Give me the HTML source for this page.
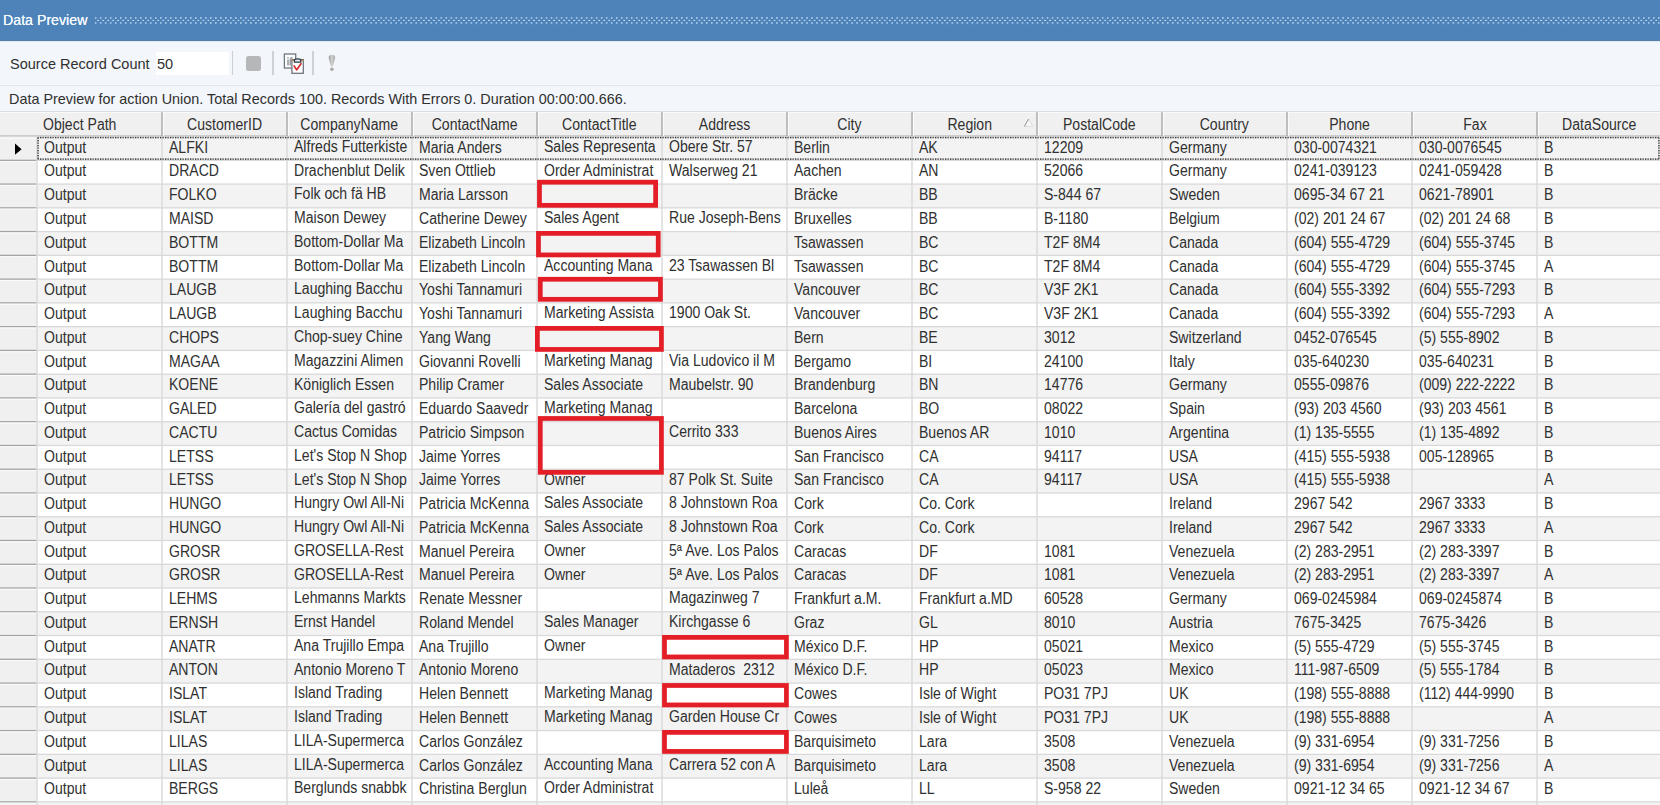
<!DOCTYPE html><html><head><meta charset="utf-8"><style>
html,body{margin:0;padding:0;}
body{width:1660px;height:805px;overflow:hidden;position:relative;background:#f3f6fa;font-family:"Liberation Sans",sans-serif;color:#303030;}
.a{position:absolute;}
.t{position:absolute;white-space:nowrap;line-height:1;transform-origin:0 0;}
.g{font-size:15.6px;transform:scaleX(0.901);}

</style></head><body>
<div class="a" style="left:0;top:0;width:1660px;height:40px;background:#4d83b9;"></div>
<div class="a" style="left:0;top:40px;width:1660px;height:1px;background:#5a7fa6;"></div>
<div class="a" style="left:0;top:41px;width:1660px;height:1px;background:#dce9f8;"></div>
<div class="t" style="left:2.7px;top:12.0px;font-size:15.4px;color:#f4f9ff;transform:scaleX(0.922);text-shadow:0 0 0.4px #fff;">Data Preview</div>
<svg class="a" style="left:94px;top:16px;" width="1566" height="8.5"><defs><pattern id="dp" x="0" y="0" width="5.01" height="5" patternUnits="userSpaceOnUse"><rect x="1" y="1.2" width="1.2" height="1.5" fill="#dcedfe"/><rect x="1" y="6.2" width="1.2" height="1.5" fill="#dcedfe"/><rect x="3.5" y="3.9" width="1.4" height="1.1" fill="#dcedfe"/></pattern></defs><rect x="0" y="0" width="1566" height="8.5" fill="url(#dp)"/></svg>
<div class="t" style="left:9.8px;top:55.6px;font-size:15px;transform:scaleX(0.968);">Source Record Count</div>
<div class="a" style="left:156px;top:52px;width:73px;height:23px;background:#fff;"></div>
<div class="t" style="left:156.8px;top:55.6px;font-size:15px;transform:scaleX(0.968);">50</div>
<div class="a" style="left:232.3px;top:51px;width:1.2px;height:24px;background:#cdd0d5;"></div>
<div class="a" style="left:272.4px;top:51px;width:1.2px;height:24px;background:#cdd0d5;"></div>
<div class="a" style="left:312.4px;top:51px;width:1.2px;height:24px;background:#cdd0d5;"></div>
<div class="a" style="left:246px;top:56px;width:15px;height:15px;background:#b6b7b9;border-radius:2.5px;"></div>
<svg class="a" style="left:280px;top:50px;" width="30" height="28">
<rect x="4.4" y="4" width="11.3" height="14" fill="#fff" stroke="#6e7780" stroke-width="1.3"/>
<rect x="7.3" y="9.5" width="1.4" height="6" fill="#8a8f95"/><rect x="7.3" y="7" width="1.4" height="1.4" fill="#8a8f95"/>
<path d="M10.2 15.5 L10.2 9.5 Q10.5 7.5 12.5 7.5" stroke="#8a8f95" stroke-width="1.3" fill="none"/>
<rect x="11.9" y="9.6" width="11.4" height="13.7" fill="#fff" stroke="#6e7780" stroke-width="1.3"/>
<path d="M11.5 10.5 L23.8 10.5" stroke="#b98a4a" stroke-width="1.2"/>
<path d="M14.4 12.2 L14.4 10.6 Q14.4 8.8 17.6 8.8 Q20.8 8.8 20.8 10.6 L20.8 12.2 Z" stroke="#2f3a44" stroke-width="1.2" fill="#e4ebf2"/>
<path d="M14.1 15.9 L16.6 19.9 L21.0 13.8" stroke="#d42a2e" stroke-width="1.7" fill="none" stroke-linecap="round" stroke-linejoin="round"/>
</svg>
<svg class="a" style="left:326px;top:53px;" width="12" height="20">
<defs><linearGradient id="eg" x1="0" x2="1" y1="0" y2="0"><stop offset="0" stop-color="#9c9c9c"/><stop offset="0.5" stop-color="#d2d2d2"/><stop offset="1" stop-color="#a8a8a8"/></linearGradient></defs>
<path d="M2.7 4.5 Q2.7 1.7 5.9 1.7 Q9.1 1.7 9.1 4.5 Q9.1 6 6.6 13.5 L5.2 13.5 Q2.7 6 2.7 4.5 Z" fill="url(#eg)"/>
<ellipse cx="5.9" cy="16.2" rx="1.8" ry="1.7" fill="#a9a9a9"/>
</svg>
<div class="a" style="left:0;top:85px;width:1660px;height:1px;background:#e2e6eb;"></div>
<div class="t" style="left:8.8px;top:91.6px;font-size:14.8px;transform:scaleX(0.972);">Data Preview for action Union. Total Records 100. Records With Errors 0. Duration 00:00:00.666.</div>
<svg class="a" style="left:0;top:0;" width="1660" height="805"><rect x="0" y="111" width="1660" height="1" fill="#d9dde2"/><rect x="0" y="112" width="1660" height="24.6" fill="#f0f0f0"/><rect x="0" y="112" width="1660" height="1" fill="#fafafa"/><rect x="0" y="135.5" width="1660" height="1.1" fill="#a9a9a9"/><rect x="161.3" y="112" width="1.4" height="24" fill="#a8a8a8"/><rect x="163.0" y="113" width="1" height="23" fill="#fbfbfb"/><rect x="286.3" y="112" width="1.4" height="24" fill="#a8a8a8"/><rect x="288.0" y="113" width="1" height="23" fill="#fbfbfb"/><rect x="411.3" y="112" width="1.4" height="24" fill="#a8a8a8"/><rect x="413.0" y="113" width="1" height="23" fill="#fbfbfb"/><rect x="536.3" y="112" width="1.4" height="24" fill="#a8a8a8"/><rect x="538.0" y="113" width="1" height="23" fill="#fbfbfb"/><rect x="661.3" y="112" width="1.4" height="24" fill="#a8a8a8"/><rect x="663.0" y="113" width="1" height="23" fill="#fbfbfb"/><rect x="786.3" y="112" width="1.4" height="24" fill="#a8a8a8"/><rect x="788.0" y="113" width="1" height="23" fill="#fbfbfb"/><rect x="911.3" y="112" width="1.4" height="24" fill="#a8a8a8"/><rect x="913.0" y="113" width="1" height="23" fill="#fbfbfb"/><rect x="1036.3" y="112" width="1.4" height="24" fill="#a8a8a8"/><rect x="1038.0" y="113" width="1" height="23" fill="#fbfbfb"/><rect x="1161.3" y="112" width="1.4" height="24" fill="#a8a8a8"/><rect x="1163.0" y="113" width="1" height="23" fill="#fbfbfb"/><rect x="1286.3" y="112" width="1.4" height="24" fill="#a8a8a8"/><rect x="1288.0" y="113" width="1" height="23" fill="#fbfbfb"/><rect x="1411.3" y="112" width="1.4" height="24" fill="#a8a8a8"/><rect x="1413.0" y="113" width="1" height="23" fill="#fbfbfb"/><rect x="1536.3" y="112" width="1.4" height="24" fill="#a8a8a8"/><rect x="1538.0" y="113" width="1" height="23" fill="#fbfbfb"/><rect x="37.0" y="136.60" width="1623.0" height="23.762" fill="#f3f3f3"/><rect x="0" y="136.60" width="37.0" height="23.762" fill="#f0f0f0"/><rect x="37.0" y="160.36" width="1623.0" height="23.762" fill="#ffffff"/><rect x="0" y="160.36" width="37.0" height="23.762" fill="#f0f0f0"/><rect x="37.0" y="184.12" width="1623.0" height="23.762" fill="#f3f3f3"/><rect x="0" y="184.12" width="37.0" height="23.762" fill="#f0f0f0"/><rect x="37.0" y="207.89" width="1623.0" height="23.762" fill="#ffffff"/><rect x="0" y="207.89" width="37.0" height="23.762" fill="#f0f0f0"/><rect x="37.0" y="231.65" width="1623.0" height="23.762" fill="#f3f3f3"/><rect x="0" y="231.65" width="37.0" height="23.762" fill="#f0f0f0"/><rect x="37.0" y="255.41" width="1623.0" height="23.762" fill="#ffffff"/><rect x="0" y="255.41" width="37.0" height="23.762" fill="#f0f0f0"/><rect x="37.0" y="279.17" width="1623.0" height="23.762" fill="#f3f3f3"/><rect x="0" y="279.17" width="37.0" height="23.762" fill="#f0f0f0"/><rect x="37.0" y="302.93" width="1623.0" height="23.762" fill="#ffffff"/><rect x="0" y="302.93" width="37.0" height="23.762" fill="#f0f0f0"/><rect x="37.0" y="326.70" width="1623.0" height="23.762" fill="#f3f3f3"/><rect x="0" y="326.70" width="37.0" height="23.762" fill="#f0f0f0"/><rect x="37.0" y="350.46" width="1623.0" height="23.762" fill="#ffffff"/><rect x="0" y="350.46" width="37.0" height="23.762" fill="#f0f0f0"/><rect x="37.0" y="374.22" width="1623.0" height="23.762" fill="#f3f3f3"/><rect x="0" y="374.22" width="37.0" height="23.762" fill="#f0f0f0"/><rect x="37.0" y="397.98" width="1623.0" height="23.762" fill="#ffffff"/><rect x="0" y="397.98" width="37.0" height="23.762" fill="#f0f0f0"/><rect x="37.0" y="421.74" width="1623.0" height="23.762" fill="#f3f3f3"/><rect x="0" y="421.74" width="37.0" height="23.762" fill="#f0f0f0"/><rect x="37.0" y="445.51" width="1623.0" height="23.762" fill="#ffffff"/><rect x="0" y="445.51" width="37.0" height="23.762" fill="#f0f0f0"/><rect x="37.0" y="469.27" width="1623.0" height="23.762" fill="#f3f3f3"/><rect x="0" y="469.27" width="37.0" height="23.762" fill="#f0f0f0"/><rect x="37.0" y="493.03" width="1623.0" height="23.762" fill="#ffffff"/><rect x="0" y="493.03" width="37.0" height="23.762" fill="#f0f0f0"/><rect x="37.0" y="516.79" width="1623.0" height="23.762" fill="#f3f3f3"/><rect x="0" y="516.79" width="37.0" height="23.762" fill="#f0f0f0"/><rect x="37.0" y="540.55" width="1623.0" height="23.762" fill="#ffffff"/><rect x="0" y="540.55" width="37.0" height="23.762" fill="#f0f0f0"/><rect x="37.0" y="564.32" width="1623.0" height="23.762" fill="#f3f3f3"/><rect x="0" y="564.32" width="37.0" height="23.762" fill="#f0f0f0"/><rect x="37.0" y="588.08" width="1623.0" height="23.762" fill="#ffffff"/><rect x="0" y="588.08" width="37.0" height="23.762" fill="#f0f0f0"/><rect x="37.0" y="611.84" width="1623.0" height="23.762" fill="#f3f3f3"/><rect x="0" y="611.84" width="37.0" height="23.762" fill="#f0f0f0"/><rect x="37.0" y="635.60" width="1623.0" height="23.762" fill="#ffffff"/><rect x="0" y="635.60" width="37.0" height="23.762" fill="#f0f0f0"/><rect x="37.0" y="659.36" width="1623.0" height="23.762" fill="#f3f3f3"/><rect x="0" y="659.36" width="37.0" height="23.762" fill="#f0f0f0"/><rect x="37.0" y="683.13" width="1623.0" height="23.762" fill="#ffffff"/><rect x="0" y="683.13" width="37.0" height="23.762" fill="#f0f0f0"/><rect x="37.0" y="706.89" width="1623.0" height="23.762" fill="#f3f3f3"/><rect x="0" y="706.89" width="37.0" height="23.762" fill="#f0f0f0"/><rect x="37.0" y="730.65" width="1623.0" height="23.762" fill="#ffffff"/><rect x="0" y="730.65" width="37.0" height="23.762" fill="#f0f0f0"/><rect x="37.0" y="754.41" width="1623.0" height="23.762" fill="#f3f3f3"/><rect x="0" y="754.41" width="37.0" height="23.762" fill="#f0f0f0"/><rect x="37.0" y="778.17" width="1623.0" height="23.762" fill="#ffffff"/><rect x="0" y="778.17" width="37.0" height="23.762" fill="#f0f0f0"/><rect x="37.0" y="801.94" width="1623.0" height="23.762" fill="#f3f3f3"/><rect x="0" y="801.94" width="37.0" height="23.762" fill="#f0f0f0"/><rect x="0" y="159.66" width="36.5" height="1.3" fill="#a4a4a4"/><rect x="0" y="161.16" width="36.5" height="1" fill="#fbfbfb"/><rect x="37.0" y="159.66" width="1623.0" height="1.3" fill="#d9d9d9"/><rect x="0" y="183.42" width="36.5" height="1.3" fill="#a4a4a4"/><rect x="0" y="184.92" width="36.5" height="1" fill="#fbfbfb"/><rect x="37.0" y="183.42" width="1623.0" height="1.3" fill="#d9d9d9"/><rect x="0" y="207.19" width="36.5" height="1.3" fill="#a4a4a4"/><rect x="0" y="208.69" width="36.5" height="1" fill="#fbfbfb"/><rect x="37.0" y="207.19" width="1623.0" height="1.3" fill="#d9d9d9"/><rect x="0" y="230.95" width="36.5" height="1.3" fill="#a4a4a4"/><rect x="0" y="232.45" width="36.5" height="1" fill="#fbfbfb"/><rect x="37.0" y="230.95" width="1623.0" height="1.3" fill="#d9d9d9"/><rect x="0" y="254.71" width="36.5" height="1.3" fill="#a4a4a4"/><rect x="0" y="256.21" width="36.5" height="1" fill="#fbfbfb"/><rect x="37.0" y="254.71" width="1623.0" height="1.3" fill="#d9d9d9"/><rect x="0" y="278.47" width="36.5" height="1.3" fill="#a4a4a4"/><rect x="0" y="279.97" width="36.5" height="1" fill="#fbfbfb"/><rect x="37.0" y="278.47" width="1623.0" height="1.3" fill="#d9d9d9"/><rect x="0" y="302.23" width="36.5" height="1.3" fill="#a4a4a4"/><rect x="0" y="303.73" width="36.5" height="1" fill="#fbfbfb"/><rect x="37.0" y="302.23" width="1623.0" height="1.3" fill="#d9d9d9"/><rect x="0" y="326.00" width="36.5" height="1.3" fill="#a4a4a4"/><rect x="0" y="327.50" width="36.5" height="1" fill="#fbfbfb"/><rect x="37.0" y="326.00" width="1623.0" height="1.3" fill="#d9d9d9"/><rect x="0" y="349.76" width="36.5" height="1.3" fill="#a4a4a4"/><rect x="0" y="351.26" width="36.5" height="1" fill="#fbfbfb"/><rect x="37.0" y="349.76" width="1623.0" height="1.3" fill="#d9d9d9"/><rect x="0" y="373.52" width="36.5" height="1.3" fill="#a4a4a4"/><rect x="0" y="375.02" width="36.5" height="1" fill="#fbfbfb"/><rect x="37.0" y="373.52" width="1623.0" height="1.3" fill="#d9d9d9"/><rect x="0" y="397.28" width="36.5" height="1.3" fill="#a4a4a4"/><rect x="0" y="398.78" width="36.5" height="1" fill="#fbfbfb"/><rect x="37.0" y="397.28" width="1623.0" height="1.3" fill="#d9d9d9"/><rect x="0" y="421.04" width="36.5" height="1.3" fill="#a4a4a4"/><rect x="0" y="422.54" width="36.5" height="1" fill="#fbfbfb"/><rect x="37.0" y="421.04" width="1623.0" height="1.3" fill="#d9d9d9"/><rect x="0" y="444.81" width="36.5" height="1.3" fill="#a4a4a4"/><rect x="0" y="446.31" width="36.5" height="1" fill="#fbfbfb"/><rect x="37.0" y="444.81" width="1623.0" height="1.3" fill="#d9d9d9"/><rect x="0" y="468.57" width="36.5" height="1.3" fill="#a4a4a4"/><rect x="0" y="470.07" width="36.5" height="1" fill="#fbfbfb"/><rect x="37.0" y="468.57" width="1623.0" height="1.3" fill="#d9d9d9"/><rect x="0" y="492.33" width="36.5" height="1.3" fill="#a4a4a4"/><rect x="0" y="493.83" width="36.5" height="1" fill="#fbfbfb"/><rect x="37.0" y="492.33" width="1623.0" height="1.3" fill="#d9d9d9"/><rect x="0" y="516.09" width="36.5" height="1.3" fill="#a4a4a4"/><rect x="0" y="517.59" width="36.5" height="1" fill="#fbfbfb"/><rect x="37.0" y="516.09" width="1623.0" height="1.3" fill="#d9d9d9"/><rect x="0" y="539.85" width="36.5" height="1.3" fill="#a4a4a4"/><rect x="0" y="541.35" width="36.5" height="1" fill="#fbfbfb"/><rect x="37.0" y="539.85" width="1623.0" height="1.3" fill="#d9d9d9"/><rect x="0" y="563.62" width="36.5" height="1.3" fill="#a4a4a4"/><rect x="0" y="565.12" width="36.5" height="1" fill="#fbfbfb"/><rect x="37.0" y="563.62" width="1623.0" height="1.3" fill="#d9d9d9"/><rect x="0" y="587.38" width="36.5" height="1.3" fill="#a4a4a4"/><rect x="0" y="588.88" width="36.5" height="1" fill="#fbfbfb"/><rect x="37.0" y="587.38" width="1623.0" height="1.3" fill="#d9d9d9"/><rect x="0" y="611.14" width="36.5" height="1.3" fill="#a4a4a4"/><rect x="0" y="612.64" width="36.5" height="1" fill="#fbfbfb"/><rect x="37.0" y="611.14" width="1623.0" height="1.3" fill="#d9d9d9"/><rect x="0" y="634.90" width="36.5" height="1.3" fill="#a4a4a4"/><rect x="0" y="636.40" width="36.5" height="1" fill="#fbfbfb"/><rect x="37.0" y="634.90" width="1623.0" height="1.3" fill="#d9d9d9"/><rect x="0" y="658.66" width="36.5" height="1.3" fill="#a4a4a4"/><rect x="0" y="660.16" width="36.5" height="1" fill="#fbfbfb"/><rect x="37.0" y="658.66" width="1623.0" height="1.3" fill="#d9d9d9"/><rect x="0" y="682.43" width="36.5" height="1.3" fill="#a4a4a4"/><rect x="0" y="683.93" width="36.5" height="1" fill="#fbfbfb"/><rect x="37.0" y="682.43" width="1623.0" height="1.3" fill="#d9d9d9"/><rect x="0" y="706.19" width="36.5" height="1.3" fill="#a4a4a4"/><rect x="0" y="707.69" width="36.5" height="1" fill="#fbfbfb"/><rect x="37.0" y="706.19" width="1623.0" height="1.3" fill="#d9d9d9"/><rect x="0" y="729.95" width="36.5" height="1.3" fill="#a4a4a4"/><rect x="0" y="731.45" width="36.5" height="1" fill="#fbfbfb"/><rect x="37.0" y="729.95" width="1623.0" height="1.3" fill="#d9d9d9"/><rect x="0" y="753.71" width="36.5" height="1.3" fill="#a4a4a4"/><rect x="0" y="755.21" width="36.5" height="1" fill="#fbfbfb"/><rect x="37.0" y="753.71" width="1623.0" height="1.3" fill="#d9d9d9"/><rect x="0" y="777.47" width="36.5" height="1.3" fill="#a4a4a4"/><rect x="0" y="778.97" width="36.5" height="1" fill="#fbfbfb"/><rect x="37.0" y="777.47" width="1623.0" height="1.3" fill="#d9d9d9"/><rect x="0" y="801.24" width="36.5" height="1.3" fill="#a4a4a4"/><rect x="0" y="802.74" width="36.5" height="1" fill="#fbfbfb"/><rect x="37.0" y="801.24" width="1623.0" height="1.3" fill="#d9d9d9"/><rect x="0" y="825.00" width="36.5" height="1.3" fill="#a4a4a4"/><rect x="0" y="826.50" width="36.5" height="1" fill="#fbfbfb"/><rect x="37.0" y="825.00" width="1623.0" height="1.3" fill="#d9d9d9"/><rect x="0" y="137.79999999999998" width="36.5" height="1" fill="#fbfbfb"/><rect x="36.3" y="136.6" width="1.4" height="668.4" fill="#d9d9d9"/><rect x="161.3" y="136.6" width="1.4" height="668.4" fill="#d9d9d9"/><rect x="286.3" y="136.6" width="1.4" height="668.4" fill="#d9d9d9"/><rect x="411.3" y="136.6" width="1.4" height="668.4" fill="#d9d9d9"/><rect x="536.3" y="136.6" width="1.4" height="668.4" fill="#d9d9d9"/><rect x="661.3" y="136.6" width="1.4" height="668.4" fill="#d9d9d9"/><rect x="786.3" y="136.6" width="1.4" height="668.4" fill="#d9d9d9"/><rect x="911.3" y="136.6" width="1.4" height="668.4" fill="#d9d9d9"/><rect x="1036.3" y="136.6" width="1.4" height="668.4" fill="#d9d9d9"/><rect x="1161.3" y="136.6" width="1.4" height="668.4" fill="#d9d9d9"/><rect x="1286.3" y="136.6" width="1.4" height="668.4" fill="#d9d9d9"/><rect x="1411.3" y="136.6" width="1.4" height="668.4" fill="#d9d9d9"/><rect x="1536.3" y="136.6" width="1.4" height="668.4" fill="#d9d9d9"/></svg>
<div class="t g" style="left:43.1px;top:116.55px;">Object Path</div>
<div class="t" style="left:162.0px;top:117.3px;width:125.0px;text-align:center;"><span class="g" style="display:inline-block;transform-origin:50% 0;">CustomerID</span></div>
<div class="t" style="left:287.0px;top:117.3px;width:125.0px;text-align:center;"><span class="g" style="display:inline-block;transform-origin:50% 0;">CompanyName</span></div>
<div class="t" style="left:412.0px;top:117.3px;width:125.0px;text-align:center;"><span class="g" style="display:inline-block;transform-origin:50% 0;">ContactName</span></div>
<div class="t" style="left:537.0px;top:117.3px;width:125.0px;text-align:center;"><span class="g" style="display:inline-block;transform-origin:50% 0;">ContactTitle</span></div>
<div class="t" style="left:662.0px;top:117.3px;width:125.0px;text-align:center;"><span class="g" style="display:inline-block;transform-origin:50% 0;">Address</span></div>
<div class="t" style="left:787.0px;top:117.3px;width:125.0px;text-align:center;"><span class="g" style="display:inline-block;transform-origin:50% 0;">City</span></div>
<div class="t" style="left:907.4px;top:117.3px;width:125.0px;text-align:center;"><span class="g" style="display:inline-block;transform-origin:50% 0;">Region</span></div>
<div class="t" style="left:1037.0px;top:117.3px;width:125.0px;text-align:center;"><span class="g" style="display:inline-block;transform-origin:50% 0;">PostalCode</span></div>
<div class="t" style="left:1162.0px;top:117.3px;width:125.0px;text-align:center;"><span class="g" style="display:inline-block;transform-origin:50% 0;">Country</span></div>
<div class="t" style="left:1287.0px;top:117.3px;width:125.0px;text-align:center;"><span class="g" style="display:inline-block;transform-origin:50% 0;">Phone</span></div>
<div class="t" style="left:1412.0px;top:117.3px;width:125.0px;text-align:center;"><span class="g" style="display:inline-block;transform-origin:50% 0;">Fax</span></div>
<div class="t" style="left:1537.0px;top:117.3px;width:125.0px;text-align:center;"><span class="g" style="display:inline-block;transform-origin:50% 0;">DataSource</span></div>
<svg class="a" style="left:1022px;top:117px;" width="13" height="11"><path d="M6.6 2 L10.8 9.5 L2.3 9.5 Z" fill="#f7f7f7" stroke="#dadada" stroke-width="0.9"/><path d="M6.6 2 L2.3 9.5" stroke="#8c8c8c" stroke-width="0.9"/></svg>
<div class="t g" style="left:43.50px;top:139.70px;">Output</div>
<div class="t g" style="left:168.50px;top:139.70px;">ALFKI</div>
<div class="t g" style="left:293.50px;top:138.90px;">Alfreds Futterkiste</div>
<div class="t g" style="left:418.50px;top:139.70px;">Maria Anders</div>
<div class="t g" style="left:543.50px;top:138.90px;">Sales Representa</div>
<div class="t g" style="left:668.50px;top:138.90px;">Obere Str. 57</div>
<div class="t g" style="left:793.50px;top:139.70px;">Berlin</div>
<div class="t g" style="left:918.50px;top:139.70px;">AK</div>
<div class="t g" style="left:1043.50px;top:139.70px;">12209</div>
<div class="t g" style="left:1168.50px;top:139.70px;">Germany</div>
<div class="t g" style="left:1293.50px;top:139.70px;">030-0074321</div>
<div class="t g" style="left:1418.50px;top:139.70px;">030-0076545</div>
<div class="t g" style="left:1543.50px;top:139.70px;">B</div>
<div class="t g" style="left:43.50px;top:163.46px;">Output</div>
<div class="t g" style="left:168.50px;top:163.46px;">DRACD</div>
<div class="t g" style="left:293.50px;top:162.66px;">Drachenblut Delik</div>
<div class="t g" style="left:418.50px;top:163.46px;">Sven Ottlieb</div>
<div class="t g" style="left:543.50px;top:162.66px;">Order Administrat</div>
<div class="t g" style="left:668.50px;top:162.66px;">Walserweg 21</div>
<div class="t g" style="left:793.50px;top:163.46px;">Aachen</div>
<div class="t g" style="left:918.50px;top:163.46px;">AN</div>
<div class="t g" style="left:1043.50px;top:163.46px;">52066</div>
<div class="t g" style="left:1168.50px;top:163.46px;">Germany</div>
<div class="t g" style="left:1293.50px;top:163.46px;">0241-039123</div>
<div class="t g" style="left:1418.50px;top:163.46px;">0241-059428</div>
<div class="t g" style="left:1543.50px;top:163.46px;">B</div>
<div class="t g" style="left:43.50px;top:187.22px;">Output</div>
<div class="t g" style="left:168.50px;top:187.22px;">FOLKO</div>
<div class="t g" style="left:293.50px;top:186.42px;">Folk och fä HB</div>
<div class="t g" style="left:418.50px;top:187.22px;">Maria Larsson</div>
<div class="t g" style="left:793.50px;top:187.22px;">Bräcke</div>
<div class="t g" style="left:918.50px;top:187.22px;">BB</div>
<div class="t g" style="left:1043.50px;top:187.22px;">S-844 67</div>
<div class="t g" style="left:1168.50px;top:187.22px;">Sweden</div>
<div class="t g" style="left:1293.50px;top:187.22px;">0695-34 67 21</div>
<div class="t g" style="left:1418.50px;top:187.22px;">0621-78901</div>
<div class="t g" style="left:1543.50px;top:187.22px;">B</div>
<div class="t g" style="left:43.50px;top:210.99px;">Output</div>
<div class="t g" style="left:168.50px;top:210.99px;">MAISD</div>
<div class="t g" style="left:293.50px;top:210.19px;">Maison Dewey</div>
<div class="t g" style="left:418.50px;top:210.99px;">Catherine Dewey</div>
<div class="t g" style="left:543.50px;top:210.19px;">Sales Agent</div>
<div class="t g" style="left:668.50px;top:210.19px;">Rue Joseph-Bens</div>
<div class="t g" style="left:793.50px;top:210.99px;">Bruxelles</div>
<div class="t g" style="left:918.50px;top:210.99px;">BB</div>
<div class="t g" style="left:1043.50px;top:210.99px;">B-1180</div>
<div class="t g" style="left:1168.50px;top:210.99px;">Belgium</div>
<div class="t g" style="left:1293.50px;top:210.99px;">(02) 201 24 67</div>
<div class="t g" style="left:1418.50px;top:210.99px;">(02) 201 24 68</div>
<div class="t g" style="left:1543.50px;top:210.99px;">B</div>
<div class="t g" style="left:43.50px;top:234.75px;">Output</div>
<div class="t g" style="left:168.50px;top:234.75px;">BOTTM</div>
<div class="t g" style="left:293.50px;top:233.95px;">Bottom-Dollar Ma</div>
<div class="t g" style="left:418.50px;top:234.75px;">Elizabeth Lincoln</div>
<div class="t g" style="left:793.50px;top:234.75px;">Tsawassen</div>
<div class="t g" style="left:918.50px;top:234.75px;">BC</div>
<div class="t g" style="left:1043.50px;top:234.75px;">T2F 8M4</div>
<div class="t g" style="left:1168.50px;top:234.75px;">Canada</div>
<div class="t g" style="left:1293.50px;top:234.75px;">(604) 555-4729</div>
<div class="t g" style="left:1418.50px;top:234.75px;">(604) 555-3745</div>
<div class="t g" style="left:1543.50px;top:234.75px;">B</div>
<div class="t g" style="left:43.50px;top:258.51px;">Output</div>
<div class="t g" style="left:168.50px;top:258.51px;">BOTTM</div>
<div class="t g" style="left:293.50px;top:257.71px;">Bottom-Dollar Ma</div>
<div class="t g" style="left:418.50px;top:258.51px;">Elizabeth Lincoln</div>
<div class="t g" style="left:543.50px;top:257.71px;">Accounting Mana</div>
<div class="t g" style="left:668.50px;top:257.71px;">23 Tsawassen Bl</div>
<div class="t g" style="left:793.50px;top:258.51px;">Tsawassen</div>
<div class="t g" style="left:918.50px;top:258.51px;">BC</div>
<div class="t g" style="left:1043.50px;top:258.51px;">T2F 8M4</div>
<div class="t g" style="left:1168.50px;top:258.51px;">Canada</div>
<div class="t g" style="left:1293.50px;top:258.51px;">(604) 555-4729</div>
<div class="t g" style="left:1418.50px;top:258.51px;">(604) 555-3745</div>
<div class="t g" style="left:1543.50px;top:258.51px;">A</div>
<div class="t g" style="left:43.50px;top:282.27px;">Output</div>
<div class="t g" style="left:168.50px;top:282.27px;">LAUGB</div>
<div class="t g" style="left:293.50px;top:281.47px;">Laughing Bacchu</div>
<div class="t g" style="left:418.50px;top:282.27px;">Yoshi Tannamuri</div>
<div class="t g" style="left:793.50px;top:282.27px;">Vancouver</div>
<div class="t g" style="left:918.50px;top:282.27px;">BC</div>
<div class="t g" style="left:1043.50px;top:282.27px;">V3F 2K1</div>
<div class="t g" style="left:1168.50px;top:282.27px;">Canada</div>
<div class="t g" style="left:1293.50px;top:282.27px;">(604) 555-3392</div>
<div class="t g" style="left:1418.50px;top:282.27px;">(604) 555-7293</div>
<div class="t g" style="left:1543.50px;top:282.27px;">B</div>
<div class="t g" style="left:43.50px;top:306.03px;">Output</div>
<div class="t g" style="left:168.50px;top:306.03px;">LAUGB</div>
<div class="t g" style="left:293.50px;top:305.23px;">Laughing Bacchu</div>
<div class="t g" style="left:418.50px;top:306.03px;">Yoshi Tannamuri</div>
<div class="t g" style="left:543.50px;top:305.23px;">Marketing Assista</div>
<div class="t g" style="left:668.50px;top:305.23px;">1900 Oak St.</div>
<div class="t g" style="left:793.50px;top:306.03px;">Vancouver</div>
<div class="t g" style="left:918.50px;top:306.03px;">BC</div>
<div class="t g" style="left:1043.50px;top:306.03px;">V3F 2K1</div>
<div class="t g" style="left:1168.50px;top:306.03px;">Canada</div>
<div class="t g" style="left:1293.50px;top:306.03px;">(604) 555-3392</div>
<div class="t g" style="left:1418.50px;top:306.03px;">(604) 555-7293</div>
<div class="t g" style="left:1543.50px;top:306.03px;">A</div>
<div class="t g" style="left:43.50px;top:329.80px;">Output</div>
<div class="t g" style="left:168.50px;top:329.80px;">CHOPS</div>
<div class="t g" style="left:293.50px;top:329.00px;">Chop-suey Chine</div>
<div class="t g" style="left:418.50px;top:329.80px;">Yang Wang</div>
<div class="t g" style="left:793.50px;top:329.80px;">Bern</div>
<div class="t g" style="left:918.50px;top:329.80px;">BE</div>
<div class="t g" style="left:1043.50px;top:329.80px;">3012</div>
<div class="t g" style="left:1168.50px;top:329.80px;">Switzerland</div>
<div class="t g" style="left:1293.50px;top:329.80px;">0452-076545</div>
<div class="t g" style="left:1418.50px;top:329.80px;">(5) 555-8902</div>
<div class="t g" style="left:1543.50px;top:329.80px;">B</div>
<div class="t g" style="left:43.50px;top:353.56px;">Output</div>
<div class="t g" style="left:168.50px;top:353.56px;">MAGAA</div>
<div class="t g" style="left:293.50px;top:352.76px;">Magazzini Alimen</div>
<div class="t g" style="left:418.50px;top:353.56px;">Giovanni Rovelli</div>
<div class="t g" style="left:543.50px;top:352.76px;">Marketing Manag</div>
<div class="t g" style="left:668.50px;top:352.76px;">Via Ludovico il M</div>
<div class="t g" style="left:793.50px;top:353.56px;">Bergamo</div>
<div class="t g" style="left:918.50px;top:353.56px;">BI</div>
<div class="t g" style="left:1043.50px;top:353.56px;">24100</div>
<div class="t g" style="left:1168.50px;top:353.56px;">Italy</div>
<div class="t g" style="left:1293.50px;top:353.56px;">035-640230</div>
<div class="t g" style="left:1418.50px;top:353.56px;">035-640231</div>
<div class="t g" style="left:1543.50px;top:353.56px;">B</div>
<div class="t g" style="left:43.50px;top:377.32px;">Output</div>
<div class="t g" style="left:168.50px;top:377.32px;">KOENE</div>
<div class="t g" style="left:293.50px;top:376.52px;">Königlich Essen</div>
<div class="t g" style="left:418.50px;top:377.32px;">Philip Cramer</div>
<div class="t g" style="left:543.50px;top:376.52px;">Sales Associate</div>
<div class="t g" style="left:668.50px;top:376.52px;">Maubelstr. 90</div>
<div class="t g" style="left:793.50px;top:377.32px;">Brandenburg</div>
<div class="t g" style="left:918.50px;top:377.32px;">BN</div>
<div class="t g" style="left:1043.50px;top:377.32px;">14776</div>
<div class="t g" style="left:1168.50px;top:377.32px;">Germany</div>
<div class="t g" style="left:1293.50px;top:377.32px;">0555-09876</div>
<div class="t g" style="left:1418.50px;top:377.32px;">(009) 222-2222</div>
<div class="t g" style="left:1543.50px;top:377.32px;">B</div>
<div class="t g" style="left:43.50px;top:401.08px;">Output</div>
<div class="t g" style="left:168.50px;top:401.08px;">GALED</div>
<div class="t g" style="left:293.50px;top:400.28px;">Galería del gastró</div>
<div class="t g" style="left:418.50px;top:401.08px;">Eduardo Saavedr</div>
<div class="t g" style="left:543.50px;top:400.28px;">Marketing Manag</div>
<div class="t g" style="left:793.50px;top:401.08px;">Barcelona</div>
<div class="t g" style="left:918.50px;top:401.08px;">BO</div>
<div class="t g" style="left:1043.50px;top:401.08px;">08022</div>
<div class="t g" style="left:1168.50px;top:401.08px;">Spain</div>
<div class="t g" style="left:1293.50px;top:401.08px;">(93) 203 4560</div>
<div class="t g" style="left:1418.50px;top:401.08px;">(93) 203 4561</div>
<div class="t g" style="left:1543.50px;top:401.08px;">B</div>
<div class="t g" style="left:43.50px;top:424.84px;">Output</div>
<div class="t g" style="left:168.50px;top:424.84px;">CACTU</div>
<div class="t g" style="left:293.50px;top:424.04px;">Cactus Comidas</div>
<div class="t g" style="left:418.50px;top:424.84px;">Patricio Simpson</div>
<div class="t g" style="left:668.50px;top:424.04px;">Cerrito 333</div>
<div class="t g" style="left:793.50px;top:424.84px;">Buenos Aires</div>
<div class="t g" style="left:918.50px;top:424.84px;">Buenos AR</div>
<div class="t g" style="left:1043.50px;top:424.84px;">1010</div>
<div class="t g" style="left:1168.50px;top:424.84px;">Argentina</div>
<div class="t g" style="left:1293.50px;top:424.84px;">(1) 135-5555</div>
<div class="t g" style="left:1418.50px;top:424.84px;">(1) 135-4892</div>
<div class="t g" style="left:1543.50px;top:424.84px;">B</div>
<div class="t g" style="left:43.50px;top:448.61px;">Output</div>
<div class="t g" style="left:168.50px;top:448.61px;">LETSS</div>
<div class="t g" style="left:293.50px;top:447.81px;">Let&#x27;s Stop N Shop</div>
<div class="t g" style="left:418.50px;top:448.61px;">Jaime Yorres</div>
<div class="t g" style="left:793.50px;top:448.61px;">San Francisco</div>
<div class="t g" style="left:918.50px;top:448.61px;">CA</div>
<div class="t g" style="left:1043.50px;top:448.61px;">94117</div>
<div class="t g" style="left:1168.50px;top:448.61px;">USA</div>
<div class="t g" style="left:1293.50px;top:448.61px;">(415) 555-5938</div>
<div class="t g" style="left:1418.50px;top:448.61px;">005-128965</div>
<div class="t g" style="left:1543.50px;top:448.61px;">B</div>
<div class="t g" style="left:43.50px;top:472.37px;">Output</div>
<div class="t g" style="left:168.50px;top:472.37px;">LETSS</div>
<div class="t g" style="left:293.50px;top:471.57px;">Let&#x27;s Stop N Shop</div>
<div class="t g" style="left:418.50px;top:472.37px;">Jaime Yorres</div>
<div class="t g" style="left:543.50px;top:471.57px;">Owner</div>
<div class="t g" style="left:668.50px;top:471.57px;">87 Polk St. Suite</div>
<div class="t g" style="left:793.50px;top:472.37px;">San Francisco</div>
<div class="t g" style="left:918.50px;top:472.37px;">CA</div>
<div class="t g" style="left:1043.50px;top:472.37px;">94117</div>
<div class="t g" style="left:1168.50px;top:472.37px;">USA</div>
<div class="t g" style="left:1293.50px;top:472.37px;">(415) 555-5938</div>
<div class="t g" style="left:1543.50px;top:472.37px;">A</div>
<div class="t g" style="left:43.50px;top:496.13px;">Output</div>
<div class="t g" style="left:168.50px;top:496.13px;">HUNGO</div>
<div class="t g" style="left:293.50px;top:495.33px;">Hungry Owl All-Ni</div>
<div class="t g" style="left:418.50px;top:496.13px;">Patricia McKenna</div>
<div class="t g" style="left:543.50px;top:495.33px;">Sales Associate</div>
<div class="t g" style="left:668.50px;top:495.33px;">8 Johnstown Roa</div>
<div class="t g" style="left:793.50px;top:496.13px;">Cork</div>
<div class="t g" style="left:918.50px;top:496.13px;">Co. Cork</div>
<div class="t g" style="left:1168.50px;top:496.13px;">Ireland</div>
<div class="t g" style="left:1293.50px;top:496.13px;">2967 542</div>
<div class="t g" style="left:1418.50px;top:496.13px;">2967 3333</div>
<div class="t g" style="left:1543.50px;top:496.13px;">B</div>
<div class="t g" style="left:43.50px;top:519.89px;">Output</div>
<div class="t g" style="left:168.50px;top:519.89px;">HUNGO</div>
<div class="t g" style="left:293.50px;top:519.09px;">Hungry Owl All-Ni</div>
<div class="t g" style="left:418.50px;top:519.89px;">Patricia McKenna</div>
<div class="t g" style="left:543.50px;top:519.09px;">Sales Associate</div>
<div class="t g" style="left:668.50px;top:519.09px;">8 Johnstown Roa</div>
<div class="t g" style="left:793.50px;top:519.89px;">Cork</div>
<div class="t g" style="left:918.50px;top:519.89px;">Co. Cork</div>
<div class="t g" style="left:1168.50px;top:519.89px;">Ireland</div>
<div class="t g" style="left:1293.50px;top:519.89px;">2967 542</div>
<div class="t g" style="left:1418.50px;top:519.89px;">2967 3333</div>
<div class="t g" style="left:1543.50px;top:519.89px;">A</div>
<div class="t g" style="left:43.50px;top:543.65px;">Output</div>
<div class="t g" style="left:168.50px;top:543.65px;">GROSR</div>
<div class="t g" style="left:293.50px;top:542.85px;">GROSELLA-Rest</div>
<div class="t g" style="left:418.50px;top:543.65px;">Manuel Pereira</div>
<div class="t g" style="left:543.50px;top:542.85px;">Owner</div>
<div class="t g" style="left:668.50px;top:542.85px;">5ª Ave. Los Palos</div>
<div class="t g" style="left:793.50px;top:543.65px;">Caracas</div>
<div class="t g" style="left:918.50px;top:543.65px;">DF</div>
<div class="t g" style="left:1043.50px;top:543.65px;">1081</div>
<div class="t g" style="left:1168.50px;top:543.65px;">Venezuela</div>
<div class="t g" style="left:1293.50px;top:543.65px;">(2) 283-2951</div>
<div class="t g" style="left:1418.50px;top:543.65px;">(2) 283-3397</div>
<div class="t g" style="left:1543.50px;top:543.65px;">B</div>
<div class="t g" style="left:43.50px;top:567.42px;">Output</div>
<div class="t g" style="left:168.50px;top:567.42px;">GROSR</div>
<div class="t g" style="left:293.50px;top:566.62px;">GROSELLA-Rest</div>
<div class="t g" style="left:418.50px;top:567.42px;">Manuel Pereira</div>
<div class="t g" style="left:543.50px;top:566.62px;">Owner</div>
<div class="t g" style="left:668.50px;top:566.62px;">5ª Ave. Los Palos</div>
<div class="t g" style="left:793.50px;top:567.42px;">Caracas</div>
<div class="t g" style="left:918.50px;top:567.42px;">DF</div>
<div class="t g" style="left:1043.50px;top:567.42px;">1081</div>
<div class="t g" style="left:1168.50px;top:567.42px;">Venezuela</div>
<div class="t g" style="left:1293.50px;top:567.42px;">(2) 283-2951</div>
<div class="t g" style="left:1418.50px;top:567.42px;">(2) 283-3397</div>
<div class="t g" style="left:1543.50px;top:567.42px;">A</div>
<div class="t g" style="left:43.50px;top:591.18px;">Output</div>
<div class="t g" style="left:168.50px;top:591.18px;">LEHMS</div>
<div class="t g" style="left:293.50px;top:590.38px;">Lehmanns Markts</div>
<div class="t g" style="left:418.50px;top:591.18px;">Renate Messner</div>
<div class="t g" style="left:668.50px;top:590.38px;">Magazinweg 7</div>
<div class="t g" style="left:793.50px;top:591.18px;">Frankfurt a.M.</div>
<div class="t g" style="left:918.50px;top:591.18px;">Frankfurt a.MD</div>
<div class="t g" style="left:1043.50px;top:591.18px;">60528</div>
<div class="t g" style="left:1168.50px;top:591.18px;">Germany</div>
<div class="t g" style="left:1293.50px;top:591.18px;">069-0245984</div>
<div class="t g" style="left:1418.50px;top:591.18px;">069-0245874</div>
<div class="t g" style="left:1543.50px;top:591.18px;">B</div>
<div class="t g" style="left:43.50px;top:614.94px;">Output</div>
<div class="t g" style="left:168.50px;top:614.94px;">ERNSH</div>
<div class="t g" style="left:293.50px;top:614.14px;">Ernst Handel</div>
<div class="t g" style="left:418.50px;top:614.94px;">Roland Mendel</div>
<div class="t g" style="left:543.50px;top:614.14px;">Sales Manager</div>
<div class="t g" style="left:668.50px;top:614.14px;">Kirchgasse 6</div>
<div class="t g" style="left:793.50px;top:614.94px;">Graz</div>
<div class="t g" style="left:918.50px;top:614.94px;">GL</div>
<div class="t g" style="left:1043.50px;top:614.94px;">8010</div>
<div class="t g" style="left:1168.50px;top:614.94px;">Austria</div>
<div class="t g" style="left:1293.50px;top:614.94px;">7675-3425</div>
<div class="t g" style="left:1418.50px;top:614.94px;">7675-3426</div>
<div class="t g" style="left:1543.50px;top:614.94px;">B</div>
<div class="t g" style="left:43.50px;top:638.70px;">Output</div>
<div class="t g" style="left:168.50px;top:638.70px;">ANATR</div>
<div class="t g" style="left:293.50px;top:637.90px;">Ana Trujillo Empa</div>
<div class="t g" style="left:418.50px;top:638.70px;">Ana Trujillo</div>
<div class="t g" style="left:543.50px;top:637.90px;">Owner</div>
<div class="t g" style="left:793.50px;top:638.70px;">México D.F.</div>
<div class="t g" style="left:918.50px;top:638.70px;">HP</div>
<div class="t g" style="left:1043.50px;top:638.70px;">05021</div>
<div class="t g" style="left:1168.50px;top:638.70px;">Mexico</div>
<div class="t g" style="left:1293.50px;top:638.70px;">(5) 555-4729</div>
<div class="t g" style="left:1418.50px;top:638.70px;">(5) 555-3745</div>
<div class="t g" style="left:1543.50px;top:638.70px;">B</div>
<div class="t g" style="left:43.50px;top:662.46px;">Output</div>
<div class="t g" style="left:168.50px;top:662.46px;">ANTON</div>
<div class="t g" style="left:293.50px;top:661.66px;">Antonio Moreno T</div>
<div class="t g" style="left:418.50px;top:662.46px;">Antonio Moreno</div>
<div class="t g" style="left:668.50px;top:661.66px;">Mataderos&nbsp; 2312</div>
<div class="t g" style="left:793.50px;top:662.46px;">México D.F.</div>
<div class="t g" style="left:918.50px;top:662.46px;">HP</div>
<div class="t g" style="left:1043.50px;top:662.46px;">05023</div>
<div class="t g" style="left:1168.50px;top:662.46px;">Mexico</div>
<div class="t g" style="left:1293.50px;top:662.46px;">111-987-6509</div>
<div class="t g" style="left:1418.50px;top:662.46px;">(5) 555-1784</div>
<div class="t g" style="left:1543.50px;top:662.46px;">B</div>
<div class="t g" style="left:43.50px;top:686.23px;">Output</div>
<div class="t g" style="left:168.50px;top:686.23px;">ISLAT</div>
<div class="t g" style="left:293.50px;top:685.43px;">Island Trading</div>
<div class="t g" style="left:418.50px;top:686.23px;">Helen Bennett</div>
<div class="t g" style="left:543.50px;top:685.43px;">Marketing Manag</div>
<div class="t g" style="left:793.50px;top:686.23px;">Cowes</div>
<div class="t g" style="left:918.50px;top:686.23px;">Isle of Wight</div>
<div class="t g" style="left:1043.50px;top:686.23px;">PO31 7PJ</div>
<div class="t g" style="left:1168.50px;top:686.23px;">UK</div>
<div class="t g" style="left:1293.50px;top:686.23px;">(198) 555-8888</div>
<div class="t g" style="left:1418.50px;top:686.23px;">(112) 444-9990</div>
<div class="t g" style="left:1543.50px;top:686.23px;">B</div>
<div class="t g" style="left:43.50px;top:709.99px;">Output</div>
<div class="t g" style="left:168.50px;top:709.99px;">ISLAT</div>
<div class="t g" style="left:293.50px;top:709.19px;">Island Trading</div>
<div class="t g" style="left:418.50px;top:709.99px;">Helen Bennett</div>
<div class="t g" style="left:543.50px;top:709.19px;">Marketing Manag</div>
<div class="t g" style="left:668.50px;top:709.19px;">Garden House Cr</div>
<div class="t g" style="left:793.50px;top:709.99px;">Cowes</div>
<div class="t g" style="left:918.50px;top:709.99px;">Isle of Wight</div>
<div class="t g" style="left:1043.50px;top:709.99px;">PO31 7PJ</div>
<div class="t g" style="left:1168.50px;top:709.99px;">UK</div>
<div class="t g" style="left:1293.50px;top:709.99px;">(198) 555-8888</div>
<div class="t g" style="left:1543.50px;top:709.99px;">A</div>
<div class="t g" style="left:43.50px;top:733.75px;">Output</div>
<div class="t g" style="left:168.50px;top:733.75px;">LILAS</div>
<div class="t g" style="left:293.50px;top:732.95px;">LILA-Supermerca</div>
<div class="t g" style="left:418.50px;top:733.75px;">Carlos González</div>
<div class="t g" style="left:793.50px;top:733.75px;">Barquisimeto</div>
<div class="t g" style="left:918.50px;top:733.75px;">Lara</div>
<div class="t g" style="left:1043.50px;top:733.75px;">3508</div>
<div class="t g" style="left:1168.50px;top:733.75px;">Venezuela</div>
<div class="t g" style="left:1293.50px;top:733.75px;">(9) 331-6954</div>
<div class="t g" style="left:1418.50px;top:733.75px;">(9) 331-7256</div>
<div class="t g" style="left:1543.50px;top:733.75px;">B</div>
<div class="t g" style="left:43.50px;top:757.51px;">Output</div>
<div class="t g" style="left:168.50px;top:757.51px;">LILAS</div>
<div class="t g" style="left:293.50px;top:756.71px;">LILA-Supermerca</div>
<div class="t g" style="left:418.50px;top:757.51px;">Carlos González</div>
<div class="t g" style="left:543.50px;top:756.71px;">Accounting Mana</div>
<div class="t g" style="left:668.50px;top:756.71px;">Carrera 52 con A</div>
<div class="t g" style="left:793.50px;top:757.51px;">Barquisimeto</div>
<div class="t g" style="left:918.50px;top:757.51px;">Lara</div>
<div class="t g" style="left:1043.50px;top:757.51px;">3508</div>
<div class="t g" style="left:1168.50px;top:757.51px;">Venezuela</div>
<div class="t g" style="left:1293.50px;top:757.51px;">(9) 331-6954</div>
<div class="t g" style="left:1418.50px;top:757.51px;">(9) 331-7256</div>
<div class="t g" style="left:1543.50px;top:757.51px;">A</div>
<div class="t g" style="left:43.50px;top:781.27px;">Output</div>
<div class="t g" style="left:168.50px;top:781.27px;">BERGS</div>
<div class="t g" style="left:293.50px;top:780.47px;">Berglunds snabbk</div>
<div class="t g" style="left:418.50px;top:781.27px;">Christina Berglun</div>
<div class="t g" style="left:543.50px;top:780.47px;">Order Administrat</div>
<div class="t g" style="left:793.50px;top:781.27px;">Luleå</div>
<div class="t g" style="left:918.50px;top:781.27px;">LL</div>
<div class="t g" style="left:1043.50px;top:781.27px;">S-958 22</div>
<div class="t g" style="left:1168.50px;top:781.27px;">Sweden</div>
<div class="t g" style="left:1293.50px;top:781.27px;">0921-12 34 65</div>
<div class="t g" style="left:1418.50px;top:781.27px;">0921-12 34 67</div>
<div class="t g" style="left:1543.50px;top:781.27px;">B</div>
<svg class="a" style="left:0;top:0;" width="1660" height="170"><defs><pattern id="dh" x="0" y="0" width="2.5" height="10" patternUnits="userSpaceOnUse"><rect x="0" y="0" width="1.3" height="10" fill="#2e2e2e"/></pattern><pattern id="dv" x="0" y="0" width="10" height="2.5" patternUnits="userSpaceOnUse"><rect x="0" y="0" width="10" height="1.3" fill="#2e2e2e"/></pattern></defs><rect x="37.4" y="136.85" width="1623.0" height="1.5" fill="url(#dh)"/><rect x="37.4" y="158.35" width="1623.0" height="1.5" fill="url(#dh)"/><rect x="37.3" y="137.6" width="1.5" height="21.5" fill="url(#dv)"/><rect x="1658.2" y="137.6" width="1.5" height="21.5" fill="url(#dv)"/></svg>
<svg class="a" style="left:14px;top:143px;" width="9" height="13"><path d="M1 0.6 L7.6 6.2 L1 11.8 Z" fill="#000"/></svg>
<svg class="a" style="left:0;top:0;" width="1660" height="805"><rect x="539.48" y="182.18" width="116.15" height="23.15" fill="none" stroke="#e41e26" stroke-width="4.75"/><rect x="538.48" y="233.38" width="119.75" height="21.55" fill="none" stroke="#e41e26" stroke-width="4.75"/><rect x="540.27" y="279.27" width="120.15" height="20.05" fill="none" stroke="#e41e26" stroke-width="4.75"/><rect x="537.38" y="328.38" width="124.05" height="21.05" fill="none" stroke="#e41e26" stroke-width="4.75"/><rect x="540.27" y="418.48" width="121.15" height="53.85" fill="none" stroke="#e41e26" stroke-width="4.75"/><rect x="664.48" y="637.38" width="121.95" height="19.55" fill="none" stroke="#e41e26" stroke-width="4.75"/><rect x="664.48" y="685.48" width="121.95" height="19.45" fill="none" stroke="#e41e26" stroke-width="4.75"/><rect x="664.48" y="732.38" width="121.95" height="19.05" fill="none" stroke="#e41e26" stroke-width="4.75"/></svg>
</body></html>
